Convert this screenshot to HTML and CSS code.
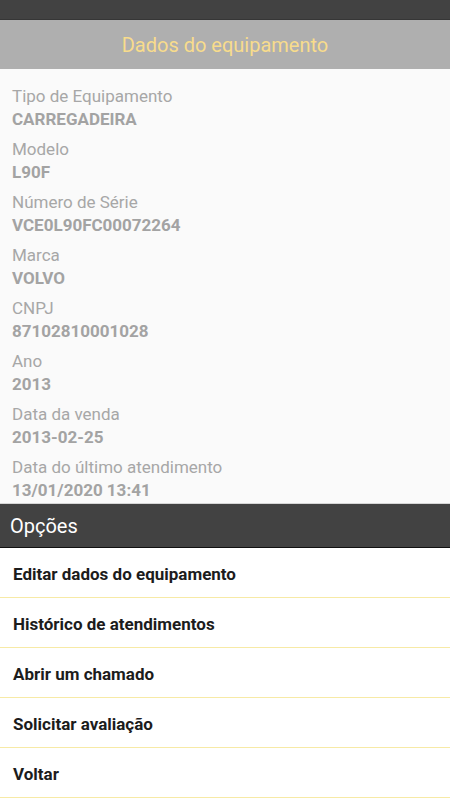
FILE: index.html
```html
<!DOCTYPE html>
<html lang="pt-BR">
<head>
    <meta charset="UTF-8">
    <meta name="viewport" content="width=device-width, initial-scale=1.0">
    <title>Dados do equipamento</title>
    <link rel="stylesheet" href="styles.css">
</head>
<body>

    <div class="status-bar"></div>

    <div class="title-bar">Dados do equipamento</div>

    <div class="details">
        <div class="field">
            <div class="label">Tipo de Equipamento</div>
            <div class="value">CARREGADEIRA</div>
        </div>
        <div class="field">
            <div class="label">Modelo</div>
            <div class="value">L90F</div>
        </div>
        <div class="field">
            <div class="label">Número de Série</div>
            <div class="value">VCE0L90FC00072264</div>
        </div>
        <div class="field">
            <div class="label">Marca</div>
            <div class="value">VOLVO</div>
        </div>
        <div class="field">
            <div class="label">CNPJ</div>
            <div class="value">87102810001028</div>
        </div>
        <div class="field">
            <div class="label">Ano</div>
            <div class="value">2013</div>
        </div>
        <div class="field">
            <div class="label">Data da venda</div>
            <div class="value">2013-02-25</div>
        </div>
        <div class="field">
            <div class="label">Data do último atendimento</div>
            <div class="value">13/01/2020 13:41</div>
        </div>
    </div>

    <div class="options-header">Opções</div>

    <ul class="options">
        <li>Editar dados do equipamento</li>
        <li>Histórico de atendimentos</li>
        <li>Abrir um chamado</li>
        <li>Solicitar avaliação</li>
        <li>Voltar</li>
    </ul>

</body>
</html>
```

FILE: styles.css
```css
body {
    margin: 0;
    font-family: Roboto, "Noto Sans", sans-serif;
    background-color: #ffffff;
}
.status-bar {
    height: 19px;
    background-color: #424242;
    border-bottom: 1px solid #363636;
}
.title-bar {
    height: 49px;
    line-height: 50px;
    background-color: #afafaf;
    color: #f8dc8c;
    font-size: 20px;
    text-align: center;
}
.details {
    background-color: #fafafa;
    padding: 16px 12px 1px;
    border-bottom: 1px solid #d6d6d6;
}
.field {
    margin-bottom: 7px;
}
.field:last-child {
    margin-bottom: 0;
}
.label {
    font-size: 17px;
    line-height: 22px;
    color: #a7a7a7;
}
.value {
    font-size: 17px;
    line-height: 24px;
    font-weight: bold;
    color: #a3a3a3;
}
.options-header {
    height: 43px;
    line-height: 44px;
    padding-left: 10px;
    background-color: #424242;
    border-bottom: 1px solid #111111;
    color: #ffffff;
    font-size: 20px;
}
.options {
    list-style: none;
    margin: 0;
    padding: 0;
}
.options li {
    height: 49px;
    line-height: 52px;
    padding-left: 13px;
    border-bottom: 1px solid #f7eaa6;
    font-size: 17px;
    font-weight: bold;
    color: #1c1c1c;
}
```
